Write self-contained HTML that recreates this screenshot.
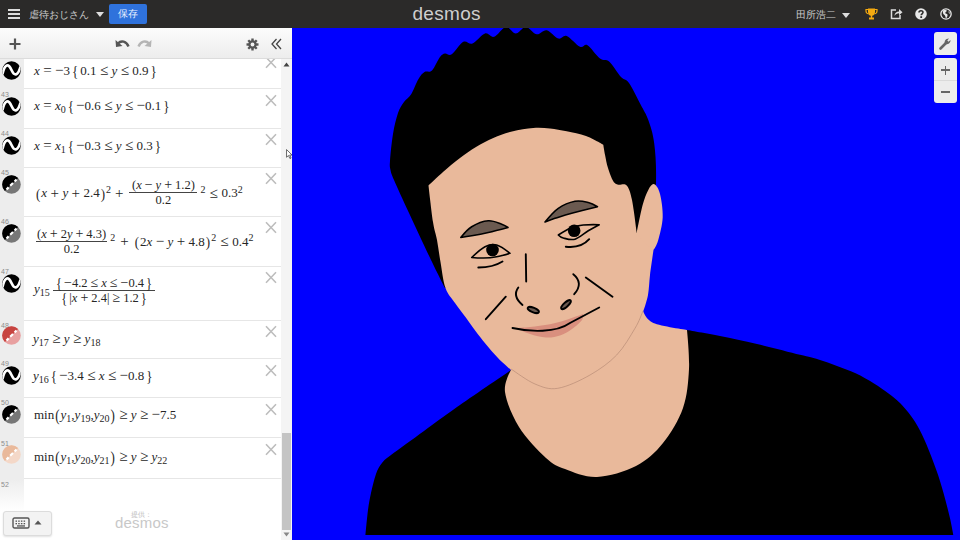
<!DOCTYPE html>
<html><head><meta charset="utf-8">
<style>
*{margin:0;padding:0;box-sizing:border-box}
html,body{width:960px;height:540px;overflow:hidden;background:#fff;font-family:"Liberation Sans",sans-serif}
.abs{position:absolute}
#top{left:0;top:0;width:960px;height:28px;background:#2b2a29}
#graph{left:292px;top:28px;width:668px;height:512px;background:#0000fe;overflow:hidden}
#tool{z-index:2;left:0;top:28px;width:292px;height:31px;background:linear-gradient(#fcfcfc,#ededed);border-bottom:1px solid #dcdcdc}
#gutter{left:0;top:59px;width:24px;height:481px;background:linear-gradient(#ededed 0,#ededed 420px,#fff 452px)}
#sb{left:281px;top:59px;width:11px;height:481px;background:#f4f4f4}
.m{position:absolute;font-family:"Liberation Serif",serif;font-size:13px;line-height:13px;color:#262626;white-space:nowrap}
.m i{font-style:italic}
.m b{font-weight:normal}
.m u{text-decoration:none;font-size:15px;margin:0 3.4px;position:relative;top:0px}
.m s{text-decoration:none;font-size:15px}
.m q{display:inline-block;transform:scaleY(1.2);margin:0 2px}
.m q::before,.m q::after{content:none}
.m .s{font-size:10px;position:relative;top:3px}
.m .p{font-size:10px;position:relative;top:-5px}
.fr{display:inline-block;vertical-align:middle;text-align:center;position:relative;top:-2px}
.fr>span{display:block;font-size:12.5px;line-height:12px}
.fr>.nu{border-bottom:1px solid #444;padding:0 1px 1px}
.fr>.de{padding-top:1px}
.fr u{font-size:14px;margin:0 3px}
.fr s{font-size:14px}
.pp{display:inline-block;transform:scaleY(1.15);margin:0 1px}
.rowb{left:24px;width:257px;height:1px;background:#e6e6e6}
.num{left:1px;font-size:7px;line-height:7px;color:#8c8c8c}
</style></head><body>
<div id="top" class="abs">
  <div class="abs" style="left:8px;top:9px;width:12px;height:2px;background:#ddd"></div>
  <div class="abs" style="left:8px;top:13px;width:12px;height:2px;background:#ddd"></div>
  <div class="abs" style="left:8px;top:17px;width:12px;height:2px;background:#ddd"></div>
  <div class="abs" style="left:29px;top:8px;font-size:10px;color:#ccc;white-space:nowrap">虐待おじさん</div>
  <div class="abs" style="left:96px;top:12px;width:0;height:0;border-left:4px solid transparent;border-right:4px solid transparent;border-top:5px solid #ddd"></div>
  <div class="abs" style="left:109px;top:4px;width:38px;height:20px;background:#2f72dc;border-radius:2px;color:#e8f0ff;font-size:10px;line-height:20px;text-align:center">保存</div>
  <div class="abs" style="left:412.5px;top:3.2px;font-size:19px;color:#cfcfcf;letter-spacing:0.3px">desmos</div>
  <div class="abs" style="left:796px;top:8px;font-size:10px;color:#ccc;white-space:nowrap">田所浩二</div>
  <div class="abs" style="left:842px;top:13px;width:0;height:0;border-left:4px solid transparent;border-right:4px solid transparent;border-top:5px solid #ddd"></div>
  <svg class="abs" style="left:865px;top:8px" width="13" height="12" viewBox="0 0 13 12"><path d="M3,0.5 H10 V4 C10,6.5 8.5,7.5 7.2,7.8 V9.5 H9 V11.5 H4 V9.5 H5.8 V7.8 C4.5,7.5 3,6.5 3,4 Z" fill="#f5aa10"/><path d="M3,1.5 H1 V3 C1,5 2.5,5.8 3.5,5.8 M10,1.5 H12 V3 C12,5 10.5,5.8 9.5,5.8" stroke="#f5aa10" stroke-width="1.2" fill="none"/></svg>
  <svg class="abs" style="left:890px;top:8px" width="13" height="12" viewBox="0 0 13 12"><path d="M6,2 H1.5 V10.5 H10 V7" stroke="#ddd" stroke-width="1.5" fill="none"/><path d="M4.5,8 C4.5,5 6.5,3.5 9,3.5 V1 L12.5,4.2 L9,7.3 V5.2 C7,5.2 5.5,6 4.5,8 Z" fill="#ddd"/></svg>
  <svg class="abs" style="left:915px;top:8px" width="12" height="12" viewBox="0 0 12 12"><circle cx="6" cy="6" r="5.8" fill="#e8e8e8"/><path d="M4,4.5 C4,2.2 8,2.2 8,4.3 C8,5.8 6.2,5.8 6.2,7.2" stroke="#2b2a29" stroke-width="1.6" fill="none"/><rect x="5.3" y="8.2" width="1.8" height="1.8" fill="#2b2a29"/></svg>
  <svg class="abs" style="left:940px;top:8px" width="12" height="12" viewBox="0 0 12 12"><circle cx="6" cy="6" r="5.8" fill="#e8e8e8"/><circle cx="6" cy="6" r="4.5" fill="#2b2a29"/><path d="M3,2.5 C4.5,1.8 6.5,2 7,3 C6,3.8 5,4 5.5,5.5 C6.5,5.8 8,6 7.5,8 C7,9 6.5,10 6,10.5 C5.5,9.5 5.5,8 4.5,7 C3,6.5 2.5,4 3,2.5 Z M8.5,3 C9.5,3.8 10,5 9.8,6 C9,5.5 8.5,4.5 8.5,3Z" fill="#e8e8e8"/></svg>

</div>
<div id="tool" class="abs"></div>
<div id="gutter" class="abs"></div>
<div id="sb" class="abs"></div>
<div class="abs rowb" style="top:88px"></div>
<div class="abs rowb" style="top:128px"></div>
<div class="abs rowb" style="top:167px"></div>
<div class="abs rowb" style="top:215.5px"></div>
<div class="abs rowb" style="top:265.5px"></div>
<div class="abs rowb" style="top:320px"></div>
<div class="abs rowb" style="top:358px"></div>
<div class="abs rowb" style="top:397px"></div>
<div class="abs rowb" style="top:437px"></div>
<div class="abs rowb" style="top:478px"></div>
<div class="abs num" style="top:91px">43</div>
<div class="abs num" style="top:130px">44</div>
<div class="abs num" style="top:169px">45</div>
<div class="abs num" style="top:218px">46</div>
<div class="abs num" style="top:268px">47</div>
<div class="abs num" style="top:322px">48</div>
<div class="abs num" style="top:360px">49</div>
<div class="abs num" style="top:399px">50</div>
<div class="abs num" style="top:440px">51</div>
<div class="abs num" style="top:481px">52</div>
<svg class="abs" style="left:2px;top:60.5px" width="19" height="19" viewBox="0 0 19 19"><clipPath id="w1"><circle cx="9.5" cy="9.5" r="9.2"/></clipPath><circle cx="9.5" cy="9.5" r="9.3" fill="#000"/><path clip-path="url(#w1)" d="M0.3,13.5 C3,2 6.5,2.5 9.5,9 C12.5,15.5 16,15.5 19,4" stroke="#fff" stroke-width="2.7" fill="none"/></svg>
<svg class="abs" style="left:2px;top:96.5px" width="19" height="19" viewBox="0 0 19 19"><clipPath id="w2"><circle cx="9.5" cy="9.5" r="9.2"/></clipPath><circle cx="9.5" cy="9.5" r="9.3" fill="#000"/><path clip-path="url(#w2)" d="M0.3,13.5 C3,2 6.5,2.5 9.5,9 C12.5,15.5 16,15.5 19,4" stroke="#fff" stroke-width="2.7" fill="none"/></svg>
<svg class="abs" style="left:2px;top:135.5px" width="19" height="19" viewBox="0 0 19 19"><clipPath id="w3"><circle cx="9.5" cy="9.5" r="9.2"/></clipPath><circle cx="9.5" cy="9.5" r="9.3" fill="#000"/><path clip-path="url(#w3)" d="M0.3,13.5 C3,2 6.5,2.5 9.5,9 C12.5,15.5 16,15.5 19,4" stroke="#fff" stroke-width="2.7" fill="none"/></svg>
<svg class="abs" style="left:2px;top:174.5px" width="19" height="19" viewBox="0 0 19 19"><circle cx="9.5" cy="9.5" r="9.3" fill="#777"/><path d="M16.1,2.9 A9.3,9.3 0 0 0 2.9,16.1 Z" fill="#000"/><path d="M4.5,14.5 L14.5,4.5" stroke="#fff" stroke-width="2.2" stroke-dasharray="4 2.2" stroke-dashoffset="1"/></svg>
<svg class="abs" style="left:2px;top:223.5px" width="19" height="19" viewBox="0 0 19 19"><circle cx="9.5" cy="9.5" r="9.3" fill="#777"/><path d="M16.1,2.9 A9.3,9.3 0 0 0 2.9,16.1 Z" fill="#000"/><path d="M4.5,14.5 L14.5,4.5" stroke="#fff" stroke-width="2.2" stroke-dasharray="4 2.2" stroke-dashoffset="1"/></svg>
<svg class="abs" style="left:2px;top:273.5px" width="19" height="19" viewBox="0 0 19 19"><clipPath id="w4"><circle cx="9.5" cy="9.5" r="9.2"/></clipPath><circle cx="9.5" cy="9.5" r="9.3" fill="#000"/><path clip-path="url(#w4)" d="M0.3,13.5 C3,2 6.5,2.5 9.5,9 C12.5,15.5 16,15.5 19,4" stroke="#fff" stroke-width="2.7" fill="none"/></svg>
<svg class="abs" style="left:2px;top:325.5px" width="19" height="19" viewBox="0 0 19 19"><circle cx="9.5" cy="9.5" r="9.3" fill="#e8a0a0"/><path d="M16.1,2.9 A9.3,9.3 0 0 0 2.9,16.1 Z" fill="#c74440"/><path d="M4.5,14.5 L14.5,4.5" stroke="#fff" stroke-width="2.2" stroke-dasharray="4 2.2" stroke-dashoffset="1"/></svg>
<svg class="abs" style="left:2px;top:365.5px" width="19" height="19" viewBox="0 0 19 19"><clipPath id="w5"><circle cx="9.5" cy="9.5" r="9.2"/></clipPath><circle cx="9.5" cy="9.5" r="9.3" fill="#000"/><path clip-path="url(#w5)" d="M0.3,13.5 C3,2 6.5,2.5 9.5,9 C12.5,15.5 16,15.5 19,4" stroke="#fff" stroke-width="2.7" fill="none"/></svg>
<svg class="abs" style="left:2px;top:404.5px" width="19" height="19" viewBox="0 0 19 19"><circle cx="9.5" cy="9.5" r="9.3" fill="#777"/><path d="M16.1,2.9 A9.3,9.3 0 0 0 2.9,16.1 Z" fill="#000"/><path d="M4.5,14.5 L14.5,4.5" stroke="#fff" stroke-width="2.2" stroke-dasharray="4 2.2" stroke-dashoffset="1"/></svg>
<svg class="abs" style="left:2px;top:444.5px" width="19" height="19" viewBox="0 0 19 19"><circle cx="9.5" cy="9.5" r="9.3" fill="#f4d8c8"/><path d="M16.1,2.9 A9.3,9.3 0 0 0 2.9,16.1 Z" fill="#e9b99b"/><path d="M4.5,14.5 L14.5,4.5" stroke="#fff" stroke-width="2.2" stroke-dasharray="4 2.2" stroke-dashoffset="1"/></svg>
<svg class="abs" style="left:265px;top:56px" width="12" height="13" viewBox="0 0 12 13"><path d="M1,1.2 L11,11.8 M11,1.2 L1,11.8" stroke="#bdbdbd" stroke-width="1.6"/></svg>
<svg class="abs" style="left:265px;top:94px" width="12" height="13" viewBox="0 0 12 13"><path d="M1,1.2 L11,11.8 M11,1.2 L1,11.8" stroke="#bdbdbd" stroke-width="1.6"/></svg>
<svg class="abs" style="left:265px;top:133px" width="12" height="13" viewBox="0 0 12 13"><path d="M1,1.2 L11,11.8 M11,1.2 L1,11.8" stroke="#bdbdbd" stroke-width="1.6"/></svg>
<svg class="abs" style="left:265px;top:172px" width="12" height="13" viewBox="0 0 12 13"><path d="M1,1.2 L11,11.8 M11,1.2 L1,11.8" stroke="#bdbdbd" stroke-width="1.6"/></svg>
<svg class="abs" style="left:265px;top:221px" width="12" height="13" viewBox="0 0 12 13"><path d="M1,1.2 L11,11.8 M11,1.2 L1,11.8" stroke="#bdbdbd" stroke-width="1.6"/></svg>
<svg class="abs" style="left:265px;top:271px" width="12" height="13" viewBox="0 0 12 13"><path d="M1,1.2 L11,11.8 M11,1.2 L1,11.8" stroke="#bdbdbd" stroke-width="1.6"/></svg>
<svg class="abs" style="left:265px;top:325px" width="12" height="13" viewBox="0 0 12 13"><path d="M1,1.2 L11,11.8 M11,1.2 L1,11.8" stroke="#bdbdbd" stroke-width="1.6"/></svg>
<svg class="abs" style="left:265px;top:364px" width="12" height="13" viewBox="0 0 12 13"><path d="M1,1.2 L11,11.8 M11,1.2 L1,11.8" stroke="#bdbdbd" stroke-width="1.6"/></svg>
<svg class="abs" style="left:265px;top:403px" width="12" height="13" viewBox="0 0 12 13"><path d="M1,1.2 L11,11.8 M11,1.2 L1,11.8" stroke="#bdbdbd" stroke-width="1.6"/></svg>
<svg class="abs" style="left:265px;top:443px" width="12" height="13" viewBox="0 0 12 13"><path d="M1,1.2 L11,11.8 M11,1.2 L1,11.8" stroke="#bdbdbd" stroke-width="1.6"/></svg>
<div class="m" style="left:34px;top:64px"><i>x</i><u>=</u><s>−</s>3<q>{</q>0.1<u>≤</u><i>y</i><u>≤</u>0.9<q>}</q></div>
<div class="m" style="left:34px;top:99px"><i>x</i><u>=</u><i>x</i><span class="s">0</span><q>{</q><s>−</s>0.6<u>≤</u><i>y</i><u>≤</u><s>−</s>0.1<q>}</q></div>
<div class="m" style="left:34px;top:138.5px"><i>x</i><u>=</u><i>x</i><span class="s">1</span><q>{</q><s>−</s>0.3<u>≤</u><i>y</i><u>≤</u>0.3<q>}</q></div>
<div class="m" style="left:35px;top:181.2px"><span class="pp">(</span><i>x</i><u>+</u><i>y</i><u>+</u>2.4<span class="pp">)</span><span class="p">2</span><u style="margin:0 4px">+</u><span class="fr" style="margin-left:2px"><span class="nu" style="padding:0 2.5px 1px">(<i>x</i><u>−</u><i>y</i><u>+</u>1.2)</span><span class="de">0.2</span></span><span class="p" style="margin-left:3px">2</span><u style="margin:0 4px">≤</u>0.3<span class="p">2</span></div>
<div class="m" style="left:36px;top:229.5px"><span class="fr"><span class="nu">(<i>x</i><u>+</u>2<i>y</i><u>+</u>4.3)</span><span class="de">0.2</span></span><span class="p" style="margin-left:3px">2</span><u style="margin:0 5px">+</u><span class="pp">(</span>2<i>x</i><u>−</u><i>y</i><u>+</u>4.8<span class="pp">)</span><span class="p">2</span><u style="margin:0 4px">≤</u>0.4<span class="p">2</span></div>
<div class="m" style="left:34px;top:278.5px"><span style="position:relative;top:-1.7px"><i>y</i><span class="s">15</span></span> <span class="fr"><span class="nu"><q>{</q><s>−</s>4.2<u>≤</u><i>x</i><u>≤</u><s>−</s>0.4<q>}</q></span><span class="de"><q>{</q>|<i>x</i><u>+</u>2.4|<u>≥</u>1.2<q>}</q></span></span></div>
<div class="m" style="left:33px;top:331.5px"><i>y</i><span class="s">17</span><u>≥</u><i>y</i><u>≥</u><i>y</i><span class="s">18</span></div>
<div class="m" style="left:33px;top:369px"><i>y</i><span class="s">16</span><q>{</q><s>−</s>3.4<u>≤</u><i>x</i><u>≤</u><s>−</s>0.8<q>}</q></div>
<div class="m" style="left:34px;top:408px">min<span class="pp" style="transform:scaleY(1.35)">(</span><i>y</i><span class="s">1</span>,<i>y</i><span class="s">19</span>,<i>y</i><span class="s">20</span><span class="pp" style="transform:scaleY(1.35)">)</span><u>≥</u><i>y</i><u>≥</u><s>−</s>7.5</div>
<div class="m" style="left:34px;top:449.5px">min<span class="pp" style="transform:scaleY(1.35)">(</span><i>y</i><span class="s">1</span>,<i>y</i><span class="s">20</span>,<i>y</i><span class="s">21</span><span class="pp" style="transform:scaleY(1.35)">)</span><u>≥</u><i>y</i><u>≥</u><i>y</i><span class="s">22</span></div>

<svg class="abs" style="z-index:3;left:9px;top:38px" width="12" height="12" viewBox="0 0 12 12"><path d="M6,0.5 V11.5 M0.5,6 H11.5" stroke="#555" stroke-width="2.2"/></svg>
<svg class="abs" style="z-index:3;left:114px;top:38px" width="16" height="11" viewBox="0 0 16 11"><path d="M14.5,8.5 C12.5,3 7,2 4,5.5" stroke="#555" stroke-width="2.4" fill="none"/><path d="M1.5,2 L2,9 L8.5,8 Z" fill="#555"/></svg>
<svg class="abs" style="z-index:3;left:137px;top:38px" width="16" height="11" viewBox="0 0 16 11"><path d="M1.5,8.5 C3.5,3 9,2 12,5.5" stroke="#b5b5b5" stroke-width="2.4" fill="none"/><path d="M14.5,2 L14,9 L7.5,8 Z" fill="#b5b5b5"/></svg>
<svg class="abs" style="z-index:3;left:246px;top:38px" width="13" height="13" viewBox="0 0 13 13"><g transform="translate(6.5 6.5)"><circle r="4.2" fill="#555"/><g fill="#555"><rect x="-1.2" y="-6" width="2.4" height="12"/><rect x="-6" y="-1.2" width="12" height="2.4"/><rect x="-1.2" y="-6" width="2.4" height="12" transform="rotate(45)"/><rect x="-1.2" y="-6" width="2.4" height="12" transform="rotate(-45)"/></g><circle r="1.9" fill="#f3f3f3"/></g></svg>
<svg class="abs" style="z-index:3;left:271px;top:38px" width="11" height="12" viewBox="0 0 11 12"><path d="M5.5,1 L1,6 L5.5,11 M10,1 L5.5,6 L10,11" stroke="#444" stroke-width="1.3" fill="none"/></svg>
<div class="abs" style="left:282px;top:433px;width:9px;height:97px;background:#c4c4c4"></div>
<svg class="abs" style="left:283px;top:62px" width="7" height="5" viewBox="0 0 7 5"><path d="M0.5,4.5 L3.5,0.5 L6.5,4.5Z" fill="#444"/></svg>
<svg class="abs" style="left:283px;top:532px" width="7" height="5" viewBox="0 0 7 5"><path d="M0.5,0.5 L3.5,4.5 L6.5,0.5Z" fill="#888"/></svg>
<div class="abs" style="left:3px;top:511px;width:49px;height:25px;background:#f3f3f3;border:1px solid #dcdcdc;border-radius:3px;box-shadow:0 1px 2px rgba(0,0,0,0.12)"></div>
<svg class="abs" style="left:12px;top:517px" width="18" height="12" viewBox="0 0 18 12"><rect x="1" y="1" width="16" height="10" rx="1.5" fill="none" stroke="#555" stroke-width="1.4"/><g fill="#555"><rect x="3.5" y="3.5" width="1.5" height="1.3"/><rect x="6.2" y="3.5" width="1.5" height="1.3"/><rect x="8.9" y="3.5" width="1.5" height="1.3"/><rect x="11.6" y="3.5" width="1.5" height="1.3"/><rect x="3.5" y="6" width="1.5" height="1.3"/><rect x="6.2" y="6" width="1.5" height="1.3"/><rect x="8.9" y="6" width="1.5" height="1.3"/><rect x="11.6" y="6" width="1.5" height="1.3"/><rect x="5" y="8.3" width="8" height="1.3"/></g></svg>
<svg class="abs" style="left:34px;top:520px" width="8" height="5" viewBox="0 0 8 5"><path d="M0.5,4.5 L4,0.5 L7.5,4.5Z" fill="#555"/></svg>
<div class="abs" style="left:131px;top:510px;font-size:7px;color:#bbb">提供：</div>
<div class="abs" style="left:115px;top:514px;font-size:15px;color:#c8c8c8;letter-spacing:0.2px">desmos</div>

<svg class="abs" style="left:286.3px;top:149px" width="7" height="10" viewBox="0 0 8 11.5"><path d="M0.6,0.6 V9.5 L2.8,7.5 L4.5,11 L5.8,10.4 L4.2,7 H7 Z" fill="#fff" stroke="#555" stroke-width="1"/></svg>
<div id="graph" class="abs"><svg class="abs" style="left:0;top:0" width="668" height="512" viewBox="292 28 668 512">
<rect x="292" y="28" width="668" height="512" fill="#0000ff"/>
<path d="M365.5,535.0 C365.5,535.0 367.1,517.0 368.0,510.0 C368.9,503.0 369.7,499.0 371.0,493.0 C372.3,487.0 374.2,479.0 376.0,474.0 C377.8,469.0 379.5,466.2 382.0,463.0 C384.5,459.8 384.0,460.3 391.0,455.0 C398.0,449.7 413.0,439.0 424.0,431.0 C435.0,423.0 442.5,417.2 457.0,407.0 C471.5,396.8 511.0,370.0 511.0,370.0 C511.0,370.0 600.0,360.0 600.0,360.0 C600.0,360.0 687.0,330.0 687.0,330.0 C687.0,330.0 708.3,333.7 720.0,336.0 C731.7,338.3 743.7,340.9 757.0,344.0 C770.3,347.1 789.8,352.2 800.0,354.8 C810.2,357.4 812.3,357.5 818.5,359.4 C824.7,361.2 830.8,363.6 837.0,365.9 C843.2,368.2 849.4,370.4 855.6,373.3 C861.8,376.2 868.5,380.1 874.0,383.5 C879.5,386.9 884.6,390.4 888.9,393.7 C893.2,396.9 896.3,399.3 900.0,403.0 C903.7,406.7 907.7,411.5 911.0,416.0 C914.3,420.5 916.7,424.3 919.7,430.0 C922.7,435.7 925.9,442.9 928.9,450.4 C931.9,457.9 935.3,466.7 938.0,474.8 C940.7,482.9 943.2,491.7 945.2,499.2 C947.2,506.7 948.9,513.6 950.3,519.6 C951.6,525.6 953.3,535.0 953.3,535.0 C953.3,535.0 365.5,535.0 365.5,535.0Z" fill="#000"/>
<path d="M445.0,288.0 C445.0,288.0 437.0,272.5 431.0,260.0 C425.0,247.5 415.2,226.3 409.0,213.0 C402.8,199.7 397.1,187.2 394.0,180.0 C390.9,172.8 391.2,173.2 390.5,170.0 C389.8,166.8 389.6,167.0 390.0,161.0 C390.4,155.0 391.7,142.0 393.0,134.0 C394.3,126.0 396.2,118.3 398.0,113.0 C399.8,107.7 401.8,105.1 404.0,102.0 C406.2,98.9 408.6,98.3 411.0,94.5 C413.4,90.7 416.2,82.8 418.5,79.0 C420.8,75.2 422.2,73.4 424.5,72.0 C426.8,70.6 429.4,73.0 432.0,70.5 C434.6,68.0 437.8,59.8 440.0,57.0 C442.2,54.2 443.1,54.0 445.0,53.5 C446.9,53.0 448.6,56.2 451.7,54.3 C454.8,52.3 459.8,43.6 463.3,41.8 C466.8,40.0 468.9,44.9 472.5,43.5 C476.1,42.1 481.4,34.6 485.0,33.5 C488.6,32.4 490.7,37.9 494.2,36.8 C497.7,35.7 502.2,27.6 505.8,27.0 C509.4,26.4 512.5,33.5 515.8,33.5 C519.1,33.5 522.3,26.9 525.8,27.0 C529.3,27.1 533.2,33.8 536.7,34.3 C540.2,34.8 543.1,29.5 546.7,30.2 C550.3,30.9 555.0,37.5 558.3,38.5 C561.6,39.5 563.1,34.6 566.7,36.0 C570.3,37.4 576.5,45.3 580.0,46.8 C583.5,48.3 584.2,43.2 587.5,45.2 C590.8,47.2 596.4,55.8 600.0,58.5 C603.6,61.2 605.9,58.6 609.4,61.7 C612.9,64.8 617.7,73.5 621.0,77.0 C624.3,80.5 625.7,78.4 629.0,83.0 C632.3,87.6 637.4,98.3 640.6,104.5 C643.8,110.7 646.0,113.5 648.3,120.0 C650.6,126.5 652.9,133.0 654.2,143.3 C655.5,153.6 656.4,165.9 656.0,182.0 C655.6,198.1 652.0,240.0 652.0,240.0 C652.0,240.0 560.0,300.0 560.0,300.0 C560.0,300.0 445.0,288.0 445.0,288.0Z" fill="#000"/>
<path d="M428.5,185.5 C428.5,185.5 437.8,176.6 443.0,172.0 C448.2,167.4 454.5,162.2 460.0,158.0 C465.5,153.8 470.4,150.3 476.0,147.0 C481.6,143.7 487.3,140.6 493.3,138.0 C499.3,135.4 505.3,133.2 512.0,131.5 C518.7,129.8 527.0,128.5 533.3,128.0 C539.6,127.5 544.4,128.0 550.0,128.5 C555.6,129.1 560.7,130.1 566.7,131.3 C572.7,132.6 579.9,133.8 586.0,136.0 C592.1,138.2 603.3,144.7 603.3,144.7 C603.3,144.7 604.2,150.8 605.0,154.7 C605.8,158.6 606.6,163.6 608.0,168.0 C609.4,172.4 611.6,178.5 613.3,181.3 C615.0,184.1 616.1,184.0 618.3,184.7 C620.5,185.4 624.4,182.9 626.7,185.5 C629.0,188.1 630.3,192.1 632.0,200.0 C633.7,207.9 636.7,232.8 636.7,232.8 C636.7,232.8 648.0,232.0 648.0,232.0 C648.0,232.0 653.5,250.0 653.5,250.0 C653.5,250.0 650.9,267.5 650.0,275.0 C649.1,282.5 649.1,288.9 648.0,295.0 C646.9,301.1 643.3,311.3 643.3,311.3 C643.3,311.3 646.0,319.9 653.3,323.0 C660.6,326.1 687.0,330.0 687.0,330.0 C687.0,330.0 689.7,356.0 689.0,369.0 C688.3,382.0 687.3,395.7 683.0,408.0 C678.7,420.3 670.8,433.3 663.0,443.0 C655.2,452.7 647.0,460.3 636.0,466.0 C625.0,471.7 608.8,476.5 597.0,477.0 C585.2,477.5 573.5,472.2 565.0,469.0 C556.5,465.8 553.7,465.0 546.0,458.0 C538.3,451.0 525.8,438.0 519.0,427.0 C512.2,416.0 506.3,401.5 505.0,392.0 C503.7,382.5 511.0,370.0 511.0,370.0 C511.0,370.0 502.2,362.4 498.0,358.0 C493.8,353.6 489.2,348.2 485.5,343.7 C481.8,339.2 478.8,335.3 475.5,331.0 C472.2,326.7 469.4,322.5 466.0,317.8 C462.6,313.1 458.4,308.0 455.0,303.0 C451.6,298.0 447.9,294.8 445.5,288.0 C443.1,281.2 441.9,270.0 440.5,262.0 C439.1,254.0 438.2,246.7 437.0,240.0 C435.8,233.3 434.4,231.1 433.0,222.0 C431.6,212.9 428.5,185.5 428.5,185.5Z" fill="#e9b99b"/>
<path d="M654.2,184.2 C656.2,184.8 658.6,188.4 660.0,193.9 C661.4,199.4 663.0,209.4 662.7,217.2 C662.4,225.0 659.6,235.1 658.1,240.6 C656.6,246.1 653.5,250.0 653.5,250.0 C653.5,250.0 647.8,245.9 645.0,243.0 C642.2,240.1 636.7,232.8 636.7,232.8 C636.7,232.8 640.6,212.7 642.5,205.6 C644.4,198.5 646.3,193.6 648.3,190.0 C650.2,186.4 652.2,183.5 654.2,184.2Z" fill="#e9b99b"/>
<path d="M511.0,369.0 C515.0,371.5 527.2,380.8 535.0,384.0 C542.8,387.2 548.6,389.8 557.8,388.3 C567.0,386.8 580.2,380.6 590.0,375.0 C599.8,369.4 609.2,362.8 616.7,355.0 C624.2,347.2 630.6,335.6 635.0,328.3 C639.4,321.0 641.7,313.9 643.0,311.0" fill="none" stroke="#b08470" stroke-width="0.6"/>
<path d="M516.0,328.0 C516.0,328.0 524.3,327.6 530.0,327.0 C535.7,326.4 544.0,325.4 550.0,324.2 C556.0,323.0 560.5,321.7 566.0,320.0 C571.5,318.3 583.0,314.0 583.0,314.0 C583.0,314.0 583.8,317.5 582.0,320.0 C580.2,322.5 575.7,326.4 572.0,329.0 C568.3,331.6 564.3,334.1 560.0,335.5 C555.7,336.9 551.0,337.8 546.0,337.5 C541.0,337.2 535.0,335.6 530.0,334.0 C525.0,332.4 516.0,328.0 516.0,328.0Z" fill="#d98f7e"/>
<g stroke="#000" stroke-width="1.6" stroke-linejoin="round" stroke-linecap="round">
<path d="M460.8,237.5 C460.8,237.5 467.1,229.5 471.7,226.7 C476.3,223.9 483.3,221.2 488.3,220.8 C493.3,220.4 498.4,223.1 501.7,224.2 C505.0,225.3 508.0,227.5 508.0,227.5 C508.0,227.5 494.4,231.1 488.3,232.5 C482.2,233.9 476.3,235.0 471.7,235.8 C467.1,236.6 460.8,237.5 460.8,237.5Z" fill="#6b5a50"/>
<path d="M545.0,222.0 C545.0,222.0 553.3,211.8 558.3,208.3 C563.3,204.9 570.0,202.3 575.0,201.3 C580.0,200.3 584.5,201.6 588.3,202.5 C592.0,203.4 597.5,206.7 597.5,206.7 C597.5,206.7 578.8,211.4 571.7,213.3 C564.6,215.2 559.5,216.9 555.0,218.3 C550.5,219.8 545.0,222.0 545.0,222.0Z" fill="#6b5a50"/>
<path d="M471.7,257.5 C471.7,257.5 480.8,248.8 485.0,246.7 C489.2,244.6 492.5,243.9 496.7,245.0 C500.9,246.1 510.0,253.3 510.0,253.3 C510.0,253.3 501.1,255.9 496.7,256.7 C492.2,257.5 487.5,257.9 483.3,258.0 C479.1,258.1 471.7,257.5 471.7,257.5Z" fill="none"/>
<path d="M558.3,235.0 C558.3,235.0 567.5,229.2 571.7,227.5 C575.9,225.8 578.7,225.5 583.3,225.0 C587.9,224.5 599.2,224.7 599.2,224.7 C599.2,224.7 592.3,228.4 588.3,230.8 C584.3,233.2 579.2,238.0 575.0,239.2 C570.8,240.4 566.1,238.7 563.3,238.0 C560.5,237.3 558.3,235.0 558.3,235.0Z" fill="none"/>
</g>
<circle cx="492.5" cy="250" r="6.3" fill="#000"/>
<circle cx="574.2" cy="230.8" r="6.3" fill="#000"/>
<g stroke="#000" stroke-width="1.9" fill="none" stroke-linecap="round">
<path d="M478.3,267.5 Q493,267.5 502.5,261.5"/><path d="M565.8,246.7 Q581,248.5 589.2,239.2"/><path d="M525.8,254.2 L526.2,281.5"/>
<path d="M518.3,287.5 Q512,296 522.5,305"/><path d="M573.3,274.2 Q584,283 574.2,294.2"/><path d="M585.8,277.5 L612.5,296.7"/><path d="M505.8,296.7 L485.8,319.2"/>
<path d="M512.5,328 C530,332 556,333 570,323 Q585,315 599.2,307.5"/>
</g>
<g stroke="#000" stroke-width="1.9" fill="#6b5a50">
<ellipse cx="533.3" cy="310" rx="6" ry="2.2" transform="rotate(22 533.3 310)"/>
<ellipse cx="566" cy="304.6" rx="6.2" ry="2.2" transform="rotate(-42 566 304.6)"/>
</g>
</svg></div>
<div class="abs" style="left:934px;top:32px;width:23px;height:23px;background:#ececec;border-radius:3px;box-shadow:0 0 1px rgba(0,0,0,0.3)"></div>
<svg class="abs" style="left:938px;top:36px" width="15" height="15" viewBox="0 0 15 15"><path d="M2.5,12.5 L8,7" stroke="#666" stroke-width="2.6" stroke-linecap="round"/><path d="M7,8 C6,5.5 7.5,2.5 11,2.6 L9.3,4.6 L10.5,5.8 L12.5,4 C12.8,7 10,9 7,8 Z" fill="#666"/></svg>
<div class="abs" style="left:934px;top:58px;width:23px;height:45px;background:#ececec;border-radius:3px;box-shadow:0 0 1px rgba(0,0,0,0.3)"></div>
<div class="abs" style="left:934px;top:80px;width:23px;height:1px;background:#dadada"></div>
<div class="abs" style="left:941px;top:69.2px;width:9px;height:1.6px;background:#666"></div>
<div class="abs" style="left:944.7px;top:65.5px;width:1.6px;height:9px;background:#666"></div>
<div class="abs" style="left:941px;top:91.2px;width:9px;height:1.6px;background:#666"></div>

</body></html>
